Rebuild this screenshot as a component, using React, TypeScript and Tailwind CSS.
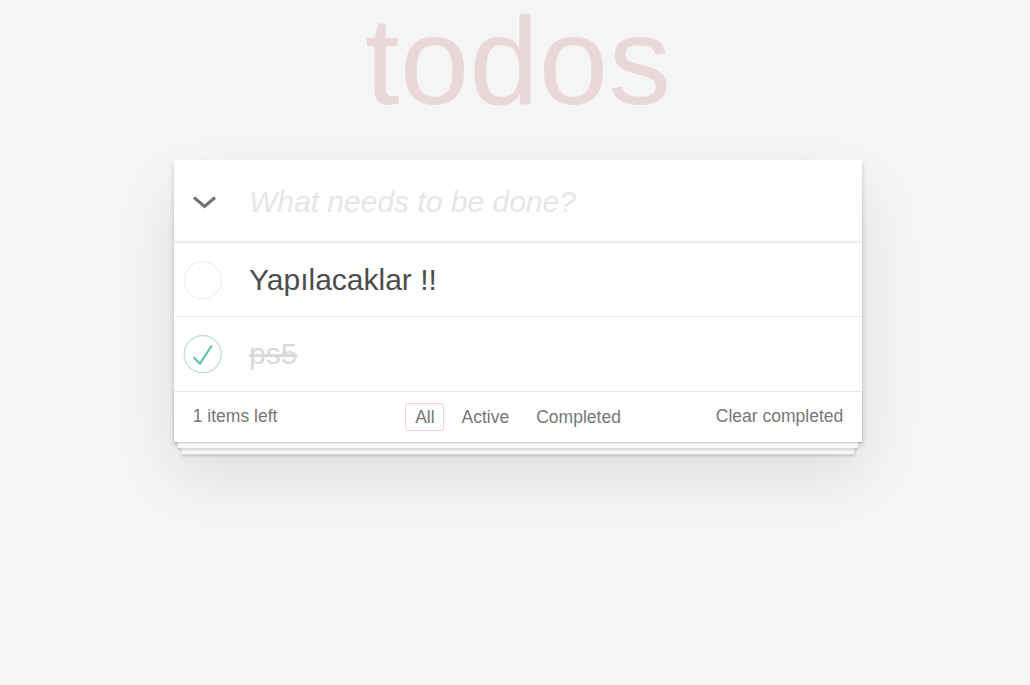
import React from 'react'

const font = { fontFamily: '"Liberation Sans", Arial, Helvetica, sans-serif' }

function Circle({ done }: { done?: boolean }) {
  return (
    <svg width="50" height="50" viewBox="-10 -18 100 135" className="shrink-0">
      <circle cx="50" cy="50" r="50" fill="none" stroke={done ? '#bddad5' : '#ededed'} strokeWidth="3" />
      {done && <path fill="#5dc2af" d="M72 25L42 71 27 56l-4 4 20 20 34-52z" />}
    </svg>
  )
}

export default function App() {
  return (
    <div className="min-h-screen bg-[#f5f5f5] text-[#4d4d4d] pt-px" style={font}>
      <div className="w-[688px] ml-[174px]">
        {/* title */}
        <h1 className="h-[120px] text-center text-[125px] leading-[120px] font-thin text-[rgba(175,47,47,0.15)]">
          todos
        </h1>

        {/* card */}
        <section className="mt-[39px] bg-white shadow-[0_2.5px_5px_rgba(0,0,0,0.2),0_31px_62px_rgba(0,0,0,0.1)]">
          <header className="flex items-center h-[82px] shadow-[inset_0_-2px_1px_rgba(0,0,0,0.03)]">
            <div className="w-[75px] shrink-0 flex pl-[18px] pt-[3px]">
              <svg width="24" height="13" viewBox="0 0 24 13">
                <path d="M2 1.5 L12.5 10.5 L23 1.5" fill="none" stroke="#737373" strokeWidth="3" />
              </svg>
            </div>
            <input
              className="flex-1 h-[42px] bg-transparent outline-none text-[30px] italic placeholder:text-[#e6e6e6] placeholder:italic pr-4"
              placeholder="What needs to be done?"
            />
          </header>

          <ul className="border-t border-[#e6e6e6]">
            <li className="flex items-center h-[74px] border-b border-[#ededed]">
              <Circle />
              <span className="ml-[25px] text-[30px] leading-[36px] text-[#4d4d4d]">Yapılacaklar !!</span>
            </li>
            <li className="flex items-center h-[74px]">
              <Circle done />
              <span className="ml-[25px] text-[30px] leading-[36px] text-[#d9d9d9] line-through">ps5</span>
            </li>
          </ul>

          {/* footer */}
          <footer className="grid grid-cols-[1fr_auto_1fr] items-center h-[51px] pb-[1px] px-[18.75px] border-t border-[#e6e6e6] text-[17.5px] text-[#777] shadow-[0_1.25px_1.25px_rgba(0,0,0,0.2),0_10px_0_-3.75px_#f6f6f6,0_11.25px_1.25px_-3.75px_rgba(0,0,0,0.2),0_20px_0_-7.5px_#f6f6f6,0_21.25px_2.5px_-7.5px_rgba(0,0,0,0.2)]">
            <span>1 items left</span>
            <div className="flex gap-[7.5px]">
              <a className="border border-[rgba(175,47,47,0.2)] rounded-[3px] px-[8.75px] py-[3px] leading-[20px]">All</a>
              <a className="border border-transparent px-[8.75px] py-[3px] leading-[20px]">Active</a>
              <a className="border border-transparent px-[8.75px] py-[3px] leading-[20px]">Completed</a>
            </div>
            <span className="text-right">Clear completed</span>
          </footer>
        </section>
      </div>
    </div>
  )
}
